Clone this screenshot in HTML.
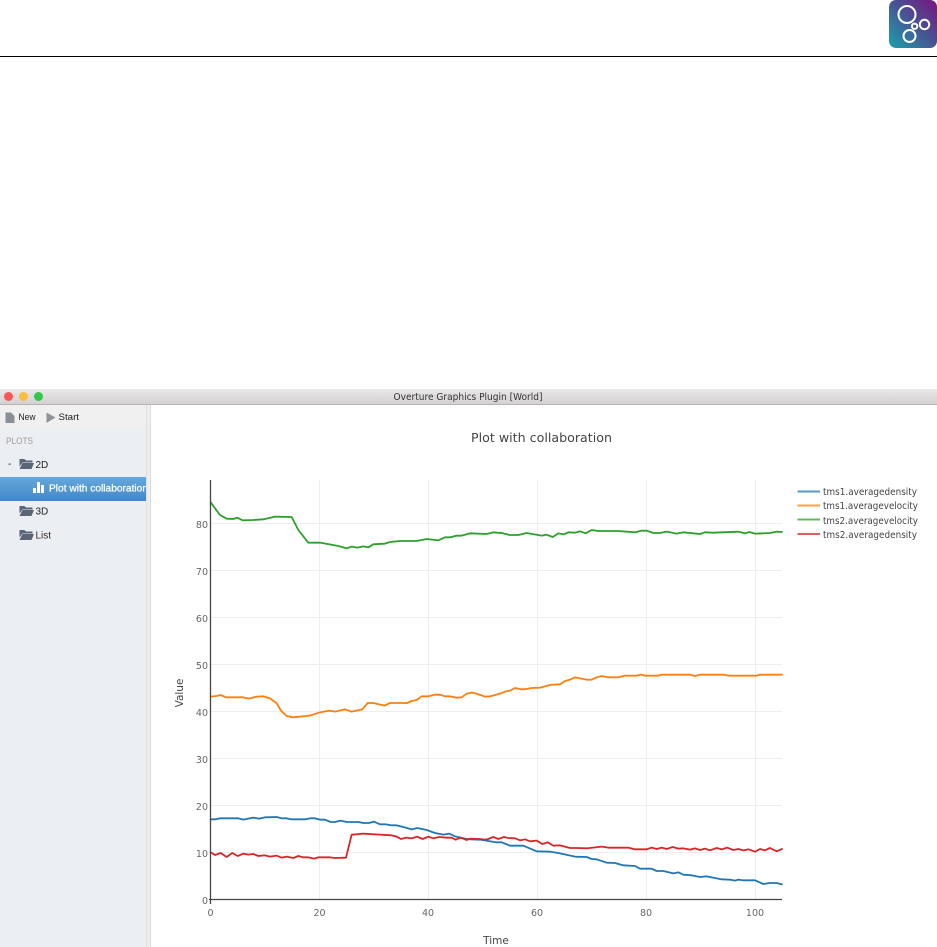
<!DOCTYPE html>
<html>
<head>
<meta charset="utf-8">
<style>
html,body{margin:0;padding:0;background:#fff;width:937px;height:947px;overflow:hidden}
svg{position:absolute;left:0;top:0;display:block}
text{font-family:"DejaVu Sans","Liberation Sans",sans-serif}
.ui{font-family:"Liberation Sans",sans-serif;font-size:9.5px;fill:#222}
.tk{font-size:9.5px;fill:#666}
.lg{font-size:9.5px;fill:#444}
.s{fill:none;stroke-width:1.8;stroke-linejoin:round;stroke-linecap:round;vector-effect:non-scaling-stroke}
.g{stroke:#eee;stroke-width:1}
</style>
</head>
<body>
<svg width="937" height="947" viewBox="0 0 937 947" xmlns="http://www.w3.org/2000/svg">
<defs>
<linearGradient id="lg" x1="0" y1="1" x2="1" y2="0"><stop offset="0" stop-color="#1aa3ac"/><stop offset=".55" stop-color="#4a4f92"/><stop offset="1" stop-color="#7a1480"/></linearGradient>
<linearGradient id="tb" x1="0" y1="0" x2="0" y2="1"><stop offset="0" stop-color="#e9e7e7"/><stop offset="1" stop-color="#d3d1d1"/></linearGradient>
<linearGradient id="sel" x1="0" y1="0" x2="0" y2="1"><stop offset="0" stop-color="#65a8dd"/><stop offset="1" stop-color="#4288c6"/></linearGradient>
</defs>

<!-- top header -->
<rect x="889" y="0" width="48" height="48" rx="7" fill="url(#lg)"/>
<g fill="none" stroke="#fff" stroke-width="2">
<circle cx="907" cy="14.5" r="8.5"/><circle cx="924.5" cy="24.5" r="4.700"/><circle cx="914.6" cy="26.3" r="2.700"/><circle cx="909.5" cy="36" r="6"/>
</g>
<rect x="0" y="56" width="937" height="1" fill="#000"/>

<!-- window chrome -->
<rect x="0" y="389" width="937" height="15" fill="url(#tb)"/>
<rect x="0" y="404" width="937" height="1" fill="#b5b3b3"/>
<circle cx="8.5" cy="396.5" r="4.5" fill="#fc5753"/>
<circle cx="23.5" cy="396.5" r="4.5" fill="#fdbc40"/>
<circle cx="38.5" cy="396.5" r="4.5" fill="#33c748"/>
<text x="468" y="400" text-anchor="middle" style="font-family:'DejaVu Sans',sans-serif;font-size:9.5px;fill:#333" textLength="149" lengthAdjust="spacingAndGlyphs">Overture Graphics Plugin [World]</text>

<!-- sidebar -->
<rect x="0" y="405" width="146" height="542" fill="#ebeef3"/>
<rect x="0" y="405" width="146" height="23" fill="#f0f0f0"/>
<rect x="146" y="405" width="4" height="542" fill="#eeeeee"/>
<rect x="146" y="405" width="1" height="542" fill="#e0e0e0"/>
<rect x="150" y="405" width="1" height="542" fill="#dcdcdc"/>
<path d="M5.500 412.500h5.500l3.500 3.500v7h-9z" fill="#8a8f95"/>
<text x="18.500" y="420" class="ui" textLength="17" lengthAdjust="spacingAndGlyphs">New</text>
<path d="M46.500 412.500l9 5-9 5.500z" fill="#8f949a"/>
<text x="58.500" y="420" class="ui" textLength="20.500" lengthAdjust="spacingAndGlyphs">Start</text>
<text x="6" y="444" class="ui" style="fill:#a09a98" textLength="27" lengthAdjust="spacingAndGlyphs">PLOTS</text>
<text x="8" y="467" class="ui" style="font-size:10px">-</text>
<g fill="#5a6678">
<path d="M19.500 459h5l1.500 1.500h6.500v2h-10l-3 4z"/><path d="M19.500 469l3-6h11.500l-2.500 6z"/>
<path d="M19.500 506h5l1.500 1.500h6.500v2h-10l-3 4z"/><path d="M19.500 516l3-6h11.500l-2.500 6z"/>
<path d="M19.500 530h5l1.500 1.500h6.500v2h-10l-3 4z"/><path d="M19.500 540l3-6h11.500l-2.500 6z"/>
</g>
<text x="35.500" y="468" class="ui" style="font-size:10px">2D</text>
<rect x="0" y="477" width="146" height="24" fill="url(#sel)"/>
<path d="M33 493h3v-5h-3zM37 493h3v-11h-3zM41 493h3v-8h-3z" fill="#fff"/>
<svg x="0" y="477" width="146" height="24"><text x="49" y="14.500" class="ui" style="font-size:10px;fill:#fff;stroke:#fff;stroke-width:.25" textLength="99" lengthAdjust="spacingAndGlyphs">Plot with collaboration</text></svg>
<text x="35.500" y="514.500" class="ui" style="font-size:10px">3D</text>
<text x="35.500" y="538.500" class="ui" style="font-size:10px;fill:#3a2a20">List</text>

<!-- plot grid -->
<g class="g">
<path d="M319.500 480V900M428.500 480V900M537.500 480V900M646.500 480V900M755.500 480V900"/>
<path d="M211 523.500H782M211 570.500H782M211 617.500H782M211 664.500H782M211 711.500H782M211 758.500H782M211 805.500H782M211 852.500H782"/>
</g>

<!-- series -->
<g transform="translate(200,490) scale(.33333)"><polyline class="s" stroke="#2ca02c" points="32,37 60,75 80,86 100,87 112,83 128,91 160,90 190,88 225,80 275,81 295,120 325,158 360,158 415,168 440,175 455,170 472,173 490,169 505,172 520,163 555,161 570,156 600,153 650,153 680,147 715,151 735,142 750,142 770,137 785,137 810,130 860,132 880,127 900,129"/></g>
<g transform="translate(500,480) scale(.33333)"><polyline class="s" stroke="#2ca02c" points="0,158 30,165 55,165 80,159 125,167 140,164 158,171 175,160 192,163 205,157 225,158 240,154 257,160 275,150 295,153 355,153 405,157 425,152 440,152 460,159 480,159 500,155 530,161 550,157 600,162 615,157 640,158 715,155 735,160 748,156 765,161 810,159 830,155 846,156"/></g>

<g transform="translate(200,650) scale(.33333)"><polyline class="s" stroke="#ff7f0e" points="32,140 50,138 62,135 78,142 130,142 147,146 170,140 190,139 210,145 230,160 243,182 260,198 280,202 300,200 330,197 360,187 388,182 405,185 435,178 455,185 487,178 503,159 520,159 553,167 570,159 622,159 635,153 650,150 665,139 685,139 705,134 720,134 735,139 750,139 770,143 785,142 800,131 815,128 830,131 840,135"/></g>
<g transform="translate(480,650) scale(.33333)"><polyline class="s" stroke="#ff7f0e" points="0,134 15,140 30,139 60,131 75,125 90,122 105,114 125,118 140,117 155,114 180,113 215,104 240,103 255,93 270,89 285,82 300,85 320,89 335,89 350,82 365,78 385,82 415,82 435,77 470,77 482,74 495,77 535,77 545,74 630,74 645,78 660,74 730,74 745,77 830,77 840,74 906,74"/></g>

<g transform="translate(170,790) scale(.33333)"><polyline class="s" stroke="#1f77b4" points="122,88 135,88 150,85 205,85 220,89 250,83 268,86 285,82 320,81 335,85 350,85 365,88 405,88 420,85 435,85 450,89 465,89 482,96 495,96 512,92 530,96 565,96 580,99 597,99 612,95 630,103 648,103 665,106 680,106 700,111 725,118 742,114 770,120 795,129 820,134 838,131 855,139 885,146 900,148 930,149"/></g>
<g transform="translate(480,790) scale(.33333)"><polyline class="s" stroke="#1f77b4" points="0,149 50,157 65,157 90,167 130,167 170,184 210,185 240,190 285,200 320,201 335,207 350,208 380,218 405,219 430,226 465,228 480,236 515,236 530,243 550,243 580,250 595,247 610,254 635,256 660,261 680,259 725,268 750,269 765,272 775,269 790,271 825,271 850,282 870,279 890,279 906,283"/></g>

<g transform="translate(170,790) scale(.33333)"><polyline class="s" stroke="#d62728" points="122,187 135,195 152,189 170,201 187,189 203,198 220,191 235,194 250,192 265,198 285,196 300,200 320,197 335,203 350,200 370,204 385,198 400,202 415,202 432,206 445,202 480,202 495,204 528,203 545,134 560,133 580,131 665,136 680,140 693,147 710,143 725,145 742,140 758,147 775,140 790,145 808,141 830,143 845,143 857,149 872,143 890,150 900,146 930,147"/></g>
<g transform="translate(480,790) scale(.33333)"><polyline class="s" stroke="#d62728" points="0,147 15,149 25,147 40,141 55,147 72,141 85,144 105,145 120,151 135,148 150,154 170,152 187,162 203,157 220,167 240,166 270,174 290,174 320,175 365,170 385,173 445,173 465,178 500,178 515,173 530,177 545,173 560,177 578,171 595,176 610,175 630,179 645,175 660,180 675,176 690,181 710,174 725,178 742,173 760,180 775,177 790,181 805,178 825,185 840,177 855,181 870,174 890,184 906,177"/></g>

<!-- axes -->
<path d="M210.500 480V904M209 899.500H782" stroke="#444" stroke-width="1.300" fill="none"/>

<!-- y ticks -->
<g class="tk" text-anchor="end">
<text x="208" y="904">0</text>
<text x="208" y="857">10</text>
<text x="208" y="810">20</text>
<text x="208" y="763">30</text>
<text x="208" y="716">40</text>
<text x="208" y="669">50</text>
<text x="208" y="622">60</text>
<text x="208" y="575">70</text>
<text x="208" y="528">80</text>
</g>
<!-- x ticks -->
<g class="tk" text-anchor="middle">
<text x="210.500" y="916">0</text>
<text x="319.500" y="916">20</text>
<text x="428" y="916">40</text>
<text x="537" y="916">60</text>
<text x="646" y="916">80</text>
<text x="755" y="916">100</text>
</g>

<!-- titles -->
<text x="541.500" y="442" text-anchor="middle" style="font-size:12px;fill:#444" textLength="141" lengthAdjust="spacingAndGlyphs">Plot with collaboration</text>
<text x="496" y="944" text-anchor="middle" style="font-size:10.500px;fill:#444">Time</text>
<text transform="translate(183,693) rotate(-90)" text-anchor="middle" style="font-size:10.500px;fill:#444">Value</text>

<!-- legend -->
<g stroke-width="2" fill="none" opacity=".75">
<path d="M797.500 491.500H820" stroke="#1f77b4"/>
<path d="M797.500 505.500H820" stroke="#ff7f0e"/>
<path d="M797.500 519.500H820" stroke="#2ca02c"/>
<path d="M797.500 534H820" stroke="#d62728"/>
</g>
<g class="lg">
<text x="823" y="495" textLength="94" lengthAdjust="spacingAndGlyphs">tms1.averagedensity</text>
<text x="823" y="509" textLength="95" lengthAdjust="spacingAndGlyphs">tms1.averagevelocity</text>
<text x="823" y="524" textLength="95" lengthAdjust="spacingAndGlyphs">tms2.averagevelocity</text>
<text x="823" y="538" textLength="94" lengthAdjust="spacingAndGlyphs">tms2.averagedensity</text>
</g>
</svg>
</body>
</html>
